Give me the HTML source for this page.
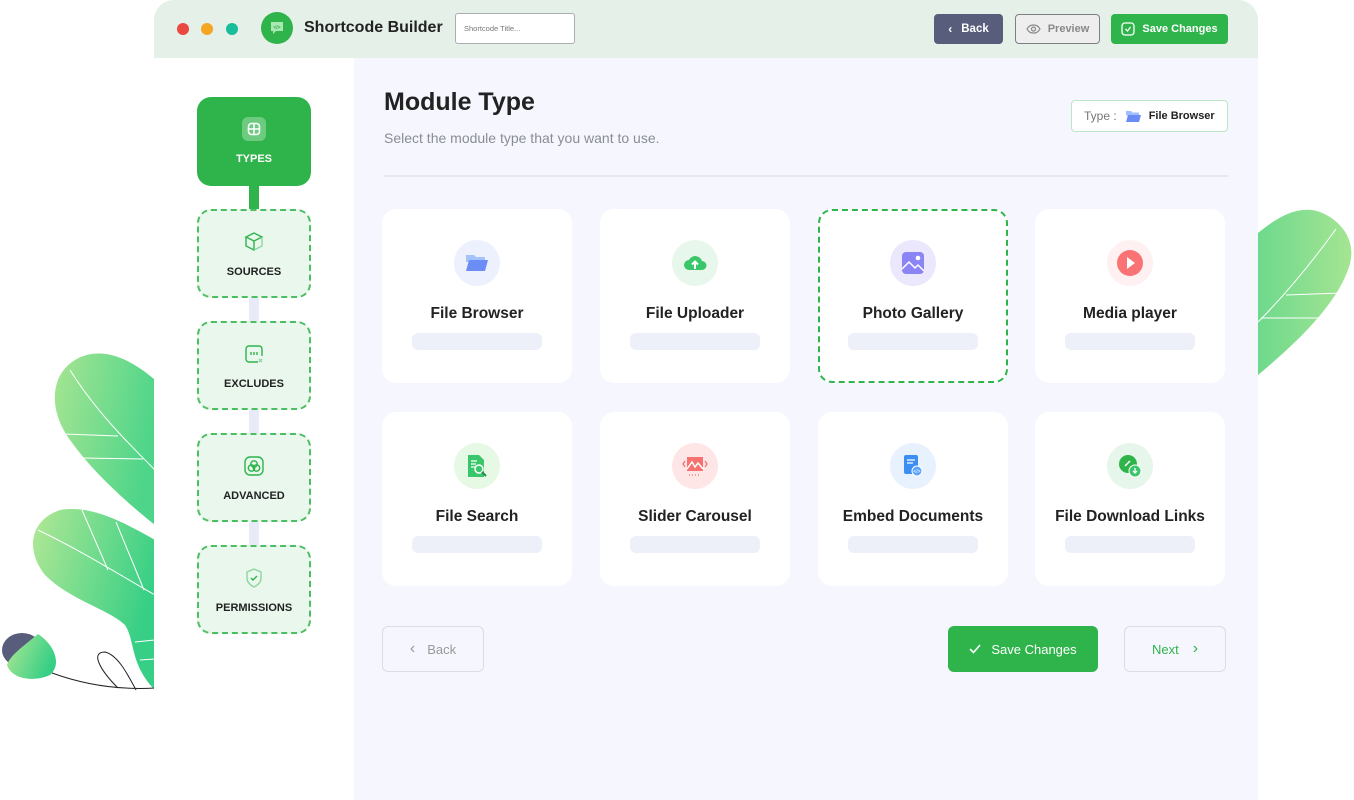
<!DOCTYPE html>
<html><head><meta charset="utf-8">
<style>
*{box-sizing:border-box;margin:0;padding:0}
body{width:1354px;height:784px;background:#fff;font-family:"Liberation Sans",sans-serif;position:relative;overflow:hidden;color:#222}
.abs{position:absolute}
.win{left:154px;top:0;width:1104px;height:800px;border-radius:20px 20px 0 0;overflow:hidden;background:#fff}
.hdr{left:0;top:0;width:1104px;height:58px;background:#e5f0e8}
.side{left:0;top:58px;width:200px;height:742px;background:#fff}
.main{left:200px;top:58px;width:904px;height:742px;background:#f5f6fe}
.dot{width:12px;height:12px;border-radius:50%;top:23px}
.btn{display:flex;align-items:center;justify-content:center;font-size:12px;font-weight:bold;border-radius:4px}
.step{left:43px;width:114px;height:89px;border-radius:14px;background:#e9f7ec;border:2px dashed #4cbe63;display:flex;flex-direction:column;align-items:center;font-size:11px;font-weight:bold;color:#222}
.step svg{margin-top:20px;margin-bottom:13px}
.conn{left:95px;width:10px;height:24px;background:#e8ebf7}
.card{width:190px;height:174px;background:#fff;border-radius:14px;display:flex;flex-direction:column;align-items:center}
.card .ic{width:46px;height:46px;border-radius:50%;margin-top:31px;display:flex;align-items:center;justify-content:center}
.card .t{font-size:15.5px;font-weight:bold;margin-top:19px;color:#222}
.card .b{width:130px;height:17px;border-radius:6px;background:#edf0f9;margin-top:10px}
</style></head><body>

<svg class="abs" style="left:0;top:340px" width="160" height="360" viewBox="0 340 160 360">
<defs>
<linearGradient id="lg1" x1="0" y1="0" x2="1" y2="0.3"><stop offset="0" stop-color="#a6e592"/><stop offset="1" stop-color="#4fd58a"/></linearGradient>
<linearGradient id="lg2" x1="0" y1="0" x2="1" y2="0.4"><stop offset="0" stop-color="#b2e895"/><stop offset="1" stop-color="#36cf85"/></linearGradient>
</defs>
<path d="M155 380 C130 358 100 345 75 360 C50 375 48 410 70 440 C95 475 130 505 155 525 Z" fill="url(#lg1)"/>
<path d="M70 370 C95 410 125 440 155 470 M64 434 L118 436 M82 458 L143 459" stroke="#fff" stroke-width="1" fill="none"/>
<path d="M155 540 C120 520 90 505 60 510 C30 520 25 550 45 575 C70 600 110 610 125 625 C135 640 130 665 155 690 Z" fill="url(#lg2)"/>
<path d="M38 530 C80 550 120 575 155 595 M82 510 L108 570 M116 522 L144 590 M135 642 L155 640 M140 660 L155 659" stroke="#fff" stroke-width="1" fill="none"/>
<ellipse cx="22" cy="650" rx="20" ry="17" fill="#575d7a"/>
<path d="M38 634 C55 645 62 665 50 675 C35 682 12 680 7 665 C10 655 25 645 38 634Z" fill="url(#lg2)"/>
<path d="M52 673 C85 685 120 690 155 688 M118 688 C100 670 90 652 105 652 C118 655 128 675 136 690" stroke="#222" stroke-width="1" fill="none"/>
</svg>

<svg class="abs" style="left:1250px;top:200px" width="104" height="190" viewBox="1250 200 104 190">
<defs><linearGradient id="lg3" x1="0" y1="0" x2="1" y2="0"><stop offset="0" stop-color="#6ed98d"/><stop offset="1" stop-color="#a5e592"/></linearGradient></defs>
<path d="M1258 233 C1280 215 1300 205 1320 212 C1345 222 1358 245 1348 270 C1335 305 1300 340 1258 375 Z" fill="url(#lg3)"/>
<path d="M1336 229 C1310 265 1285 295 1258 322 M1286 295 L1342 293 M1261 318 L1322 318" stroke="#fff" stroke-width="1" fill="none"/>
</svg>

<div class="abs win">
 <div class="abs hdr">
  <div class="abs dot" style="left:23px;background:#e9493e"></div>
  <div class="abs dot" style="left:47px;background:#f4a521"></div>
  <div class="abs dot" style="left:72px;background:#18bd9c"></div>
  <div class="abs" style="left:107px;top:12px;width:32px;height:32px;border-radius:50%;background:#2fb44b;display:flex;align-items:center;justify-content:center">
   <svg width="16" height="16" viewBox="0 0 16 16"><path d="M2 2h12v9H7l-3 3v-3H2z" fill="#a7e8b3"/><text x="8" y="9" font-size="5" text-anchor="middle" fill="#2fb44b" font-family="Liberation Sans" font-weight="bold">&lt;/&gt;</text></svg>
  </div>
  <div class="abs" style="left:150px;top:19px;font-size:16px;font-weight:bold;color:#222">Shortcode Builder</div>
  <div class="abs" style="left:301px;top:13px;width:120px;height:31px;border:1px solid #a9aeb0;border-radius:3px;background:#fff;font-size:7.5px;color:#777;padding:10px 0 0 8px">Shortcode Title...</div>
  <div class="abs btn" style="left:780px;top:14px;width:69px;height:30px;background:#575d7a;color:#fff;font-size:11.5px"><span style="margin-right:9px;font-size:12px">&#8249;</span>Back</div>
  <div class="abs btn" style="left:861px;top:14px;width:85px;height:30px;background:#eeeeee;border:1px solid #7d7f85;color:#888;font-size:11px">
   <svg width="15" height="10" viewBox="0 0 15 10" style="margin-right:7px"><path d="M1 5C3 1.5 5 1 7.5 1S12 1.5 14 5C12 8.5 10 9 7.5 9S3 8.5 1 5Z" fill="none" stroke="#888" stroke-width="1.2"/><circle cx="7.5" cy="5" r="2" fill="none" stroke="#888" stroke-width="1.2"/></svg>Preview</div>
  <div class="abs btn" style="left:957px;top:14px;width:117px;height:30px;background:#2fb44b;color:#fff;font-size:11px">
   <svg width="14" height="14" viewBox="0 0 14 14" style="margin-right:7px"><rect x="1" y="1" width="12" height="12" rx="3" fill="none" stroke="#fff" stroke-width="1.3"/><path d="M4.5 7l2 2 3-4" fill="none" stroke="#fff" stroke-width="1.3"/></svg>Save Changes</div>
 </div>

 <div class="abs side">
  <div class="abs" style="left:43px;top:39px;width:114px;height:89px;border-radius:14px;background:#2fb44b;display:flex;flex-direction:column;align-items:center;color:#fff;font-size:11px;font-weight:bold">
   <div style="margin-top:20px;width:24px;height:24px;border-radius:6px;background:#6dcb80;display:flex;align-items:center;justify-content:center"><svg width="14" height="14" viewBox="0 0 14 14"><rect x="1.5" y="1.5" width="11" height="11" rx="3" fill="none" stroke="#fff" stroke-width="1.6"/><path d="M7 2v10M2 7h10" stroke="#fff" stroke-width="1.6"/></svg></div>
   <div style="margin-top:12px">TYPES</div>
  </div>
  <div class="abs" style="left:95px;top:128px;width:10px;height:23px;background:#2fb44b"></div>
  <div class="abs step" style="top:151px"><svg width="22" height="22" viewBox="0 0 22 22" fill="none" stroke="#2fb44b" stroke-width="1.4"><path d="M11 2l8 4-8 4-8-4z"/><path d="M3 6v9l8 4V10"/><path d="M19 6v9l-8 4" stroke="#8fd69e"/></svg>SOURCES</div>
  <div class="abs conn" style="top:240px"></div>
  <div class="abs step" style="top:263px"><svg width="22" height="22" viewBox="0 0 22 22" fill="none" stroke="#2fb44b" stroke-width="1.4"><path d="M15 19H6a3 3 0 0 1-3-3V6a3 3 0 0 1 3-3h10a3 3 0 0 1 3 3v7"/><path d="M8 9v3M11 9v3M14 9v3" stroke="#2fb44b"/><path d="M16 16l3 3M19 16l-3 3" stroke="#8fd69e"/></svg>EXCLUDES</div>
  <div class="abs conn" style="top:352px"></div>
  <div class="abs step" style="top:375px"><svg width="22" height="22" viewBox="0 0 22 22" fill="none" stroke="#2fb44b" stroke-width="1.4"><rect x="2" y="2" width="18" height="18" rx="5"/><circle cx="11" cy="9" r="3.2"/><circle cx="8.5" cy="13" r="3.2"/><circle cx="13.5" cy="13" r="3.2"/></svg>ADVANCED</div>
  <div class="abs conn" style="top:464px"></div>
  <div class="abs step" style="top:487px"><svg width="22" height="22" viewBox="0 0 22 22" fill="none" stroke="#2fb44b" stroke-width="1.4"><path d="M11 2l7 3v6c0 4-3 7-7 9-4-2-7-5-7-9V5z" stroke="#8fd69e"/><path d="M8 11l2 2 4-4"/></svg>PERMISSIONS</div>
 </div>

 <div class="abs main">
  <div class="abs" style="left:30px;top:30px;font-size:25px;font-weight:bold;color:#222">Module Type</div>
  <div class="abs" style="left:30px;top:72px;font-size:14px;color:#8a8d95">Select the module type that you want to use.</div>
  <div class="abs" style="left:717px;top:42px;width:157px;height:32px;background:#fff;border:1px solid #b9e6c3;border-radius:4px;display:flex;align-items:center;padding-left:12px;font-size:12px;color:#777">Type :
   <svg width="17" height="13" viewBox="0 0 17 13" style="margin:0 7px 0 8px"><path d="M1 1h5l1.5 1.5H14v3H1z" fill="#9fc0ff"/><path d="M3 5h13l-2 7H1z" fill="#6b8cf5"/></svg><b style="color:#222;font-size:11px">File Browser</b></div>
  <div class="abs" style="left:30px;top:117px;width:844px;height:2px;background:#e6e7ef"></div>

  <div class="abs card" style="left:28px;top:151px"><div class="ic" style="background:#edf1fe"><svg width="24" height="20" viewBox="0 0 24 20"><path d="M1 2h8l2 2h9v5H1z" fill="#a5c3fb"/><path d="M4 7h19l-3 11H1z" fill="#6c8cf6"/></svg></div><div class="t">File Browser</div><div class="b"></div></div>
  <div class="abs card" style="left:246px;top:151px"><div class="ic" style="background:#e8f7ec"><svg width="24" height="20" viewBox="0 0 24 20"><path d="M6 17a5 5 0 0 1 0-10 7 7 0 0 1 13 1 4.5 4.5 0 0 1 0 9z" fill="#3ac66a"/><path d="M12 16V9M9 11.5l3-3 3 3" stroke="#fff" stroke-width="2" fill="none"/></svg></div><div class="t">File Uploader</div><div class="b"></div></div>
  <div class="abs card" style="left:464px;top:151px;border:2px dashed #2fb44b"><div class="ic" style="background:#ebe7fc;margin-top:29px"><svg width="24" height="24" viewBox="0 0 24 24"><rect x="1" y="1" width="22" height="22" rx="4" fill="#8b84f4"/><circle cx="17" cy="7" r="2.3" fill="#fff"/><path d="M1 18l7-7 6 6 3-3 6 6" stroke="#fff" stroke-width="1.5" fill="none"/></svg></div><div class="t">Photo Gallery</div><div class="b"></div></div>
  <div class="abs card" style="left:681px;top:151px"><div class="ic" style="background:#fff1f1"><svg width="30" height="30" viewBox="0 0 30 30"><circle cx="15" cy="15" r="13" fill="#f97374"/><path d="M12 9l8 6-8 6z" fill="#fff"/></svg></div><div class="t">Media player</div><div class="b"></div></div>

  <div class="abs card" style="left:28px;top:354px"><div class="ic" style="background:#e6f9e5"><svg width="22" height="24" viewBox="0 0 22 24"><path d="M2 1h11l5 5v17H2z" fill="#3ac66a"/><path d="M5 7h6M5 10h5M5 13h4" stroke="#fff" stroke-width="1.2"/><circle cx="13" cy="15" r="4" fill="none" stroke="#fff" stroke-width="1.5"/><path d="M16 18l4 4" stroke="#2a8a4c" stroke-width="2"/></svg></div><div class="t">File Search</div><div class="b"></div></div>
  <div class="abs card" style="left:246px;top:354px"><div class="ic" style="background:#ffe6e6"><svg width="28" height="22" viewBox="0 0 28 22"><rect x="6" y="2" width="16" height="14" fill="#f67170"/><path d="M6 14l5-7 3 5 3-4 5 6" stroke="#fff" stroke-width="1.5" fill="none"/><path d="M4 6l-2 3 2 3M24 6l2 3-2 3" stroke="#f67170" stroke-width="1.3" fill="none"/><path d="M8 20h12" stroke="#f67170" stroke-width="1.2" stroke-dasharray="1 2"/></svg></div><div class="t">Slider Carousel</div><div class="b"></div></div>
  <div class="abs card" style="left:464px;top:354px"><div class="ic" style="background:#e8f1fe"><svg width="22" height="24" viewBox="0 0 22 24"><rect x="2" y="1" width="14" height="19" rx="2" fill="#3d8ef3"/><path d="M5 6h8M5 9h6" stroke="#fff" stroke-width="1.2"/><circle cx="15" cy="17" r="5" fill="#5aa4ff" stroke="#fff"/><text x="15" y="19" font-size="5" text-anchor="middle" fill="#fff" font-family="Liberation Sans">&lt;/&gt;</text></svg></div><div class="t">Embed Documents</div><div class="b"></div></div>
  <div class="abs card" style="left:681px;top:354px"><div class="ic" style="background:#e6f6ea"><svg width="24" height="24" viewBox="0 0 24 24"><circle cx="10" cy="10" r="9" fill="#2fb44b"/><path d="M7 12l5-5" stroke="#fff" stroke-width="1.5"/><circle cx="17" cy="17" r="6" fill="#3ac66a" stroke="#fff"/><path d="M17 14v5M15 17l2 2 2-2" stroke="#fff" stroke-width="1.3" fill="none"/></svg></div><div class="t">File Download Links</div><div class="b"></div></div>

  <div class="abs btn" style="left:28px;top:568px;width:102px;height:46px;border:1px solid #dcdde6;border-radius:6px;color:#999;font-size:13px;font-weight:normal"><span style="margin-right:12px;font-size:16px">&#8249;</span>Back</div>
  <div class="abs btn" style="left:594px;top:568px;width:150px;height:46px;background:#2fb44b;color:#fff;border-radius:6px;font-size:13px;font-weight:normal"><svg width="12" height="10" viewBox="0 0 12 10" style="margin-right:10px"><path d="M1 5l3.5 3.5L11 1" stroke="#fff" stroke-width="1.6" fill="none"/></svg>Save Changes</div>
  <div class="abs btn" style="left:770px;top:568px;width:102px;height:46px;border:1px solid #dcdde6;border-radius:6px;color:#2fb44b;font-size:13px;font-weight:normal">Next<span style="margin-left:14px;font-size:16px">&#8250;</span></div>
 </div>
</div>
</body></html>
